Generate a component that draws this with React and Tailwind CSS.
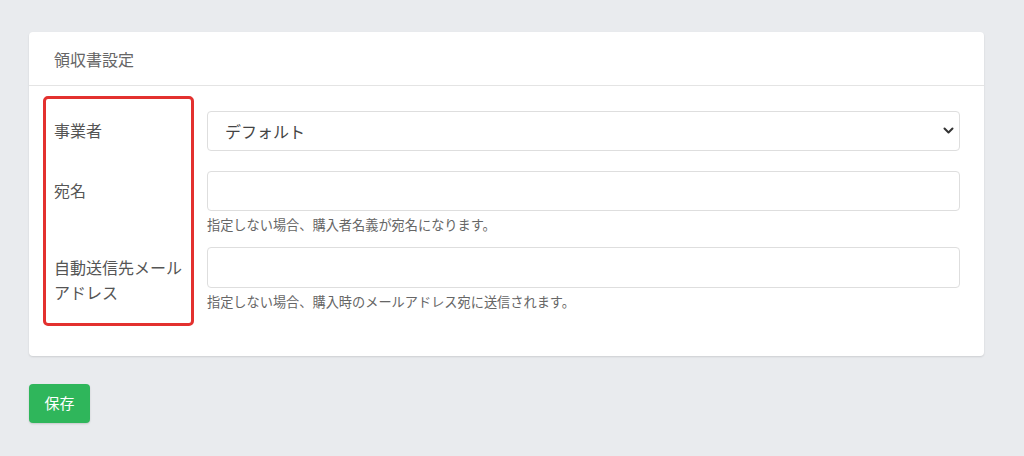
export default function App() {
  const font = { fontFamily: '"Noto Sans CJK JP", "Noto Sans", sans-serif' };
  return (
    <div className="min-h-screen w-full bg-[#e9ebee] pt-[32px] pl-[29px]" style={font}>
      <div className="w-[955px] rounded-[4px] bg-white shadow-[0_1px_2px_rgba(0,0,0,0.12)]">
        <div className="flex h-[54px] items-center border-b border-[#e4e4e4] px-[25px] text-[16px] text-[#666]">
          領収書設定
        </div>

        <div className="relative px-[25px] pr-[24px] pt-[25px] pb-[46px]">
          {/* annotation box over the label column */}
          <div className="pointer-events-none absolute left-[14px] top-[10px] h-[230px] w-[151px] rounded-[5px] border-[3px] border-[#e3312f]" />

          <div className="mb-[20px] flex">
            <div className="w-[153px] shrink-0 pr-[14px] pt-[7px] text-[16px] leading-[25px] text-[#555]">事業者</div>
            <div className="relative flex-1">
              <select className="h-[40px] w-full appearance-none rounded-[4px] border border-[#dedede] bg-white pl-[17px] text-[16px] text-[#444] outline-none">
                <option>デフォルト</option>
              </select>
              <svg className="pointer-events-none absolute right-[6px] top-[15px]" width="11" height="9" viewBox="0 0 11 9">
                <path d="M1.5 2.5 L5.5 6.5 L9.5 2.5" fill="none" stroke="#333" strokeWidth="2" strokeLinecap="round" strokeLinejoin="round" />
              </svg>
            </div>
          </div>

          <div className="mb-[14px] flex">
            <div className="w-[153px] shrink-0 pr-[14px] pt-[7px] text-[16px] leading-[25px] text-[#555]">宛名</div>
            <div className="flex-1">
              <input className="h-[40px] w-full rounded-[4px] border border-[#dedede] bg-white px-3 outline-none" />
              <p className="mt-[6px] text-[13.2px] leading-[16px] text-[#666]">指定しない場合、購入者名義が宛名になります。</p>
            </div>
          </div>

          <div className="flex">
            <div className="w-[153px] shrink-0 pr-[14px] pt-[8px] text-[16px] leading-[25px] text-[#555]">自動送信先メールアドレス</div>
            <div className="flex-1">
              <input className="h-[41px] w-full rounded-[4px] border border-[#dedede] bg-white px-3 outline-none" />
              <p className="mt-[6px] text-[13.2px] leading-[16px] text-[#666]">指定しない場合、購入時のメールアドレス宛に送信されます。</p>
            </div>
          </div>
        </div>
      </div>

      <button className="mt-[28px] h-[39px] w-[61px] rounded-[4px] bg-[#2fb65b] text-[15px] text-white shadow-[0_1px_2px_rgba(0,0,0,0.15)]">
        保存
      </button>
    </div>
  );
}
